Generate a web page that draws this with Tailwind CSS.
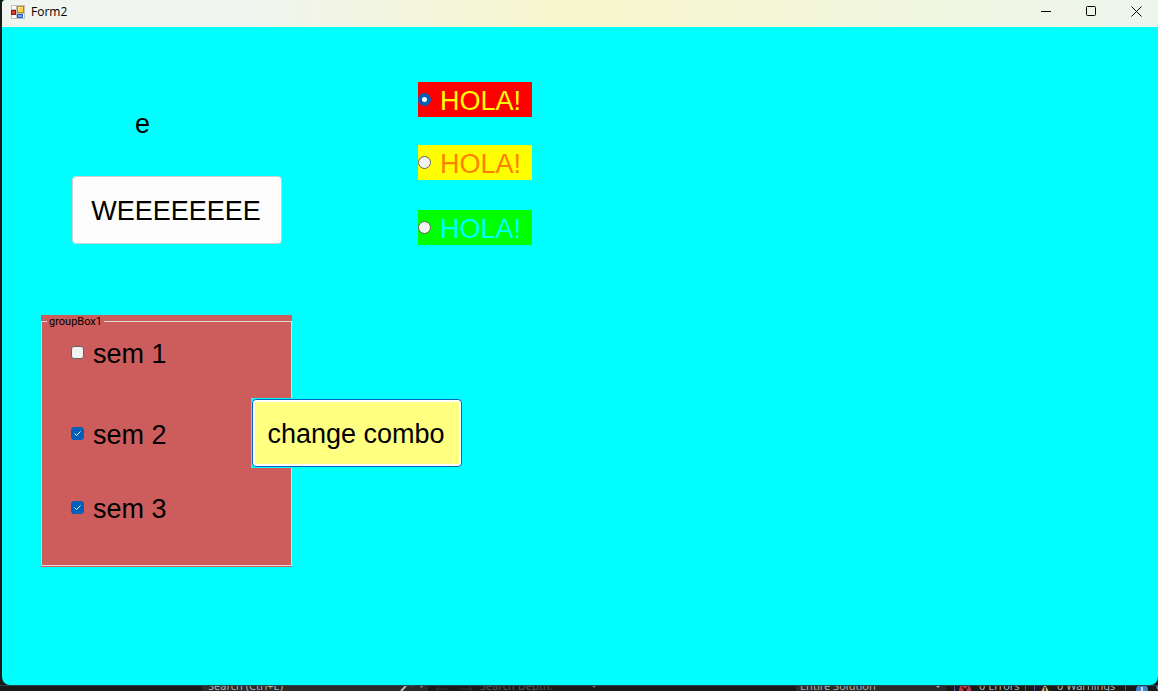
<!DOCTYPE html>
<html lang="es">
<head>
<meta charset="utf-8">
<title>Form2</title>
<script src="https://cdn.jsdelivr.net/npm/@tailwindcss/browser@4"></script>
</head>
<body class="flex h-screen flex-col overflow-hidden bg-[#1a1a1a] font-['Liberation_Sans',sans-serif] text-black">
  <section class="ml-0.5 flex min-h-0 flex-1 flex-col overflow-hidden rounded-b-lg rounded-tl-sm bg-[#00ffff]">
    <header class="flex h-[27px] shrink-0 items-start justify-between bg-linear-to-r from-[#f0f5f0] from-20% via-[#f7f6cb] via-50% to-[#edf6ee] font-['Open_Sans',sans-serif]">
      <div class="flex items-center gap-1.5 pt-1 pl-[9px]">
        <svg class="size-3.5" viewBox="0 0 14 14" aria-hidden="true">
          <path fill="#c0c0c0" d="M0 0h14v14H0z"/>
          <path fill="#fff" d="M1 1h4v3H1zM1 10h4v3H1zM12 9h1v4h-1z"/>
          <path fill="#b78b16" d="M6 1h7v7H6z"/><path fill="#ffd33d" d="M7 2h5v5H7z"/><path fill="#ffeb92" d="M7 2h4v1H8v3H7z"/>
          <path fill="#8f1713" d="M0 5h5v5H0z"/><path fill="#dc4332" d="M1 6h3v3H1z"/>
          <path fill="#285bc4" d="M6 9h6v4H6z"/><path fill="#71a5ff" d="M7 10h4v2H7z"/>
        </svg>
        <h1 class="text-xs leading-4">Form2</h1>
      </div>
      <div class="flex">
        <button type="button" aria-label="Minimize" class="grid h-[23px] w-[45px] place-items-center pl-0.5"><svg class="size-[11px]" viewBox="0 0 11 11"><path d="M0 5.5h10" stroke="#000"/></svg></button>
        <button type="button" aria-label="Maximize" class="grid h-[23px] w-[45px] place-items-center pl-0.5"><svg class="size-[11px]" viewBox="0 0 11 11"><rect x=".5" y=".5" width="9" height="9" rx="1" fill="none" stroke="#000"/></svg></button>
        <button type="button" aria-label="Close" class="grid h-[23px] w-[45px] place-items-center pl-0.5"><svg class="size-[11px]" viewBox="0 0 11 11"><path d="M.5.5l10 10M10.5.5l-10 10" fill="none" stroke="#000"/></svg></button>
      </div>
    </header>

    <main class="flex flex-1 items-start gap-[126px] pl-[39px] text-[27px] leading-8">
      <div class="flex w-[251px] flex-col pt-[81px]">
        <p class="pl-[94px]">e</p>
        <button type="button" class="mt-9 ml-[31px] h-[68px] w-[210px] rounded border border-[#d0d0d0] bg-[#fdfdfd] pt-0.5 pr-0.5">WEEEEEEEE</button>

        <div class="relative mt-[71px] bg-[#cd5c5c] pb-px">
          <fieldset class="border border-[#dcdcdc] pb-10 pl-[29px]">
            <legend class="-ml-6 px-0.5 font-['Roboto',sans-serif] text-[11px] leading-[13px]">groupBox1</legend>
            <label class="mt-2.5 flex w-max items-start gap-[9px]">
              <span class="relative mt-2 block size-[13px]">
                <input type="checkbox" class="peer block size-[13px] appearance-none rounded-[3px] border border-[#626262] bg-[#f3f3f3] checked:border-[#005fb8] checked:bg-[#005fb8]">
                <svg class="pointer-events-none absolute inset-0 hidden peer-checked:block" viewBox="0 0 13 13"><path d="M3.5 6.5l2 2 4-4" fill="none" stroke="#fff"/></svg>
              </span>sem 1
            </label>
            <label class="mt-[49px] flex w-max items-start gap-[9px]">
              <span class="relative mt-2 block size-[13px]">
                <input type="checkbox" checked class="peer block size-[13px] appearance-none rounded-[3px] border border-[#626262] bg-[#f3f3f3] checked:border-[#005fb8] checked:bg-[#005fb8]">
                <svg class="pointer-events-none absolute inset-0 hidden peer-checked:block" viewBox="0 0 13 13"><path d="M3.5 6.5l2 2 4-4" fill="none" stroke="#fff"/></svg>
              </span>sem 2
            </label>
            <label class="mt-[42px] flex w-max items-start gap-[9px]">
              <span class="relative mt-2 block size-[13px]">
                <input type="checkbox" checked class="peer block size-[13px] appearance-none rounded-[3px] border border-[#626262] bg-[#f3f3f3] checked:border-[#005fb8] checked:bg-[#005fb8]">
                <svg class="pointer-events-none absolute inset-0 hidden peer-checked:block" viewBox="0 0 13 13"><path d="M3.5 6.5l2 2 4-4" fill="none" stroke="#fff"/></svg>
              </span>sem 3
            </label>
          </fieldset>
          <!-- Button overlapping the right edge of the group box -->
          <div class="absolute top-[83px] left-[210px] bg-[#00ffff] p-px">
            <button type="button" class="block h-[68px] w-[210px] rounded border border-[#0067c0] bg-white p-0.5"><span class="flex h-full items-center justify-center bg-[#ffff80] pt-0.5 pr-0.5 whitespace-nowrap">change combo</span></button>
          </div>
        </div>
      </div>

      <div class="flex flex-col pt-[55px]">
        <label class="flex h-[35px] w-[114px] items-start gap-[9px] bg-[#ff0000] pt-[3px] text-[#ffff00]">
          <input type="radio" name="hola" checked class="mt-2 size-[13px] shrink-0 appearance-none rounded-full border border-[#626262] bg-[#f3f3f3] checked:border-4 checked:border-[#005fb8] checked:bg-white">HOLA!
        </label>
        <label class="mt-7 flex h-[35px] w-[114px] items-start gap-[9px] bg-[#ffff00] pt-[3px] text-[#ff8000]">
          <input type="radio" name="hola" class="mt-2 size-[13px] shrink-0 appearance-none rounded-full border border-[#626262] bg-[#f3f3f3] checked:border-4 checked:border-[#005fb8] checked:bg-white">HOLA!
        </label>
        <label class="mt-[30px] flex h-[35px] w-[114px] items-start gap-[9px] bg-[#00ff00] pt-[3px] text-[#00ffff]">
          <input type="radio" name="hola" class="mt-2 size-[13px] shrink-0 appearance-none rounded-full border border-[#626262] bg-[#f3f3f3] checked:border-4 checked:border-[#005fb8] checked:bg-white">HOLA!
        </label>
      </div>
    </main>
  </section>

  <!-- Editor toolbar peeking out under the window -->
  <footer class="flex h-1.5 shrink-0 items-end overflow-hidden border-t border-[#2c4444] pl-[202px] font-['Noto_Sans',sans-serif] text-[11px] leading-[10px] whitespace-nowrap text-[#b0b0b0]">
    <div class="flex w-[226px] items-end justify-between bg-[#2b2b2b] pl-1.5">
      <span>Search (Ctrl+E)</span>
      <svg class="mr-1 h-3 w-6" viewBox="0 0 24 12"><path d="M1 12l4-4a4 4 0 0 1 7-1" fill="none" stroke="#bbb" stroke-width="2"/><path d="M19 6h5l-2.500 3z" fill="#888"/></svg>
    </div>
    <div class="flex w-[170px] items-end gap-2 pl-2 text-[#555]">
      <svg class="h-3 w-[36px]" viewBox="0 0 36 12"><path d="M5 6l-5 4 5 4M0 10h12M31 6l5 4-5 4M24 10h12" fill="none" stroke="#333"/></svg>
      <span>Search Depth:</span>
      <svg class="ml-auto h-3 w-2" viewBox="0 0 8 12"><path d="M1 6h6l-3 3z" fill="#666"/></svg>
    </div>
    <div class="ml-auto flex w-[150px] items-end justify-between bg-[#2b2b2b] px-1">
      <span>Entire Solution</span>
      <svg class="h-3 w-2" viewBox="0 0 8 12"><path d="M1 6h6l-3 3z" fill="#aaa"/></svg>
    </div>
    <div class="ml-2 flex w-[72px] items-end gap-2 border-x border-[#5b4fb0] pl-1">
      <svg class="h-3 w-3" viewBox="0 0 12 12"><circle cx="6" cy="11" r="6" fill="#b83a48"/><path d="M3 8l6 6M9 8l-6 6" stroke="#2b1010" stroke-width="1.500"/></svg>
      <span>0 Errors</span>
    </div>
    <div class="ml-2 flex w-[92px] items-end gap-1.5 border-x border-[#5b4fb0] pl-1">
      <svg class="h-3 w-3" viewBox="0 0 12 12"><path d="M6 5l6 12H0z" fill="#cbb26a"/><path d="M6 8v4" stroke="#222" stroke-width="1.500"/></svg>
      <span>0 Warnings</span>
    </div>
    <div class="ml-2 flex w-6 items-end gap-2 pl-0.5">
      <svg class="h-3 w-3 shrink-0" viewBox="0 0 12 12"><circle cx="6" cy="11" r="6" fill="#3b84cf"/><path d="M6 8v4" stroke="#fff" stroke-width="1.500"/></svg>
      <span>0</span>
    </div>
  </footer>
</body>
</html>
